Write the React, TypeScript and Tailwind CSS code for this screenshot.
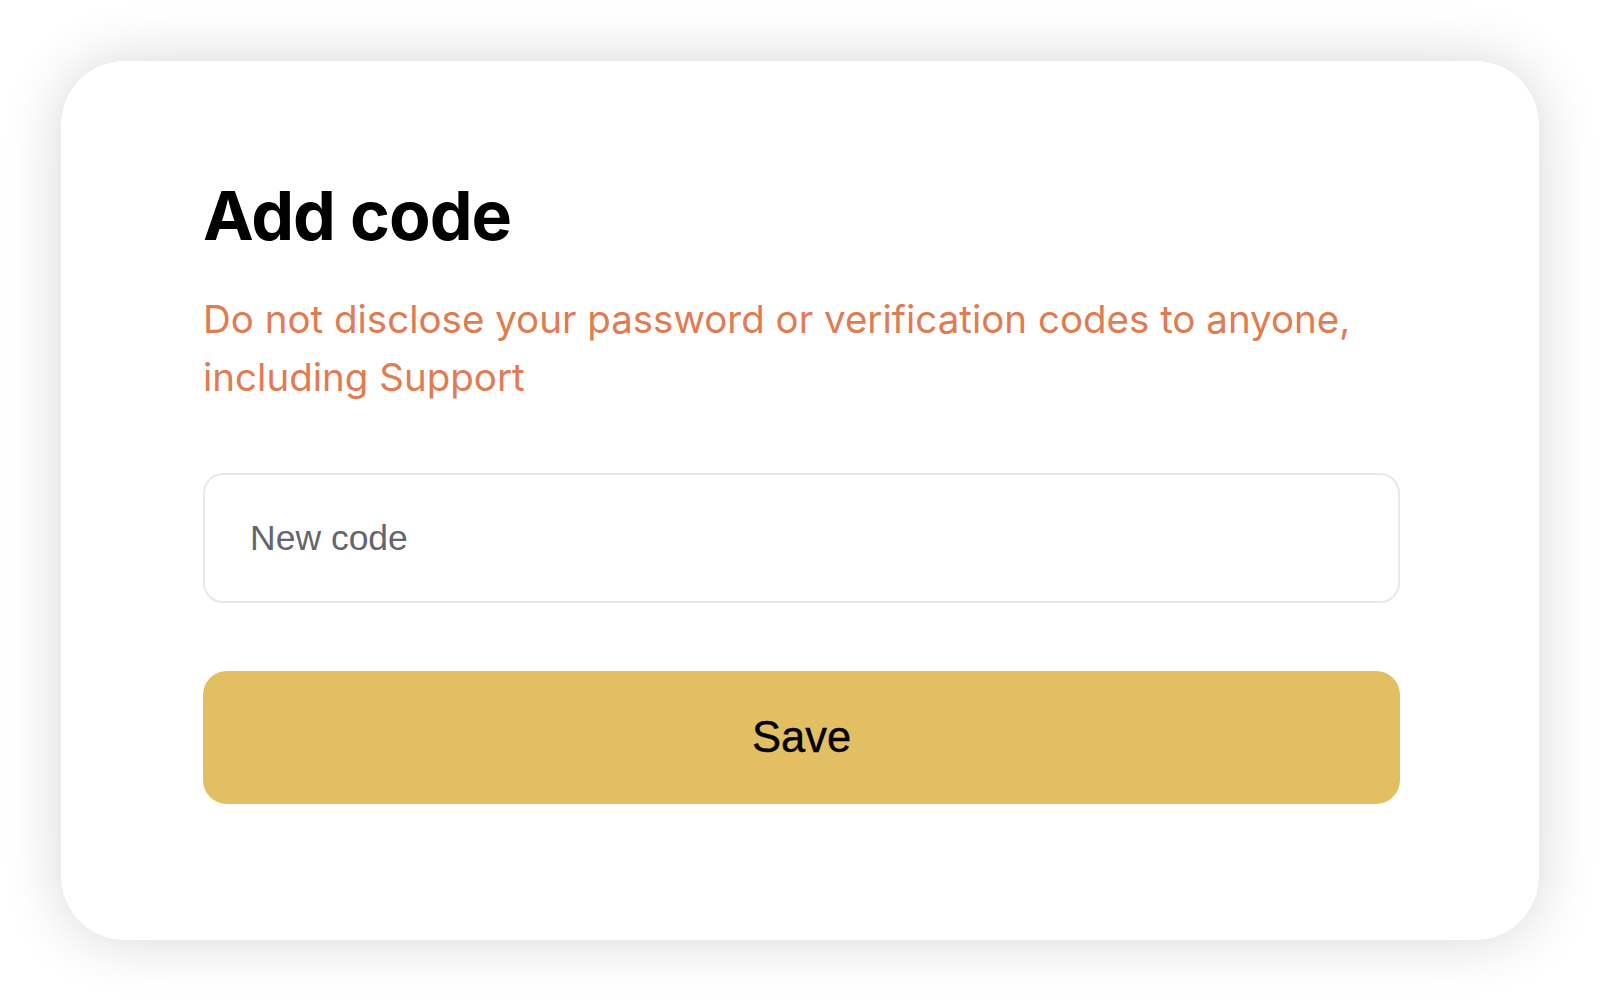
import React from "react";

const AddCodeCard: React.FC = () => {
  return (
    <div className="w-[1478px] rounded-[64px] bg-white pl-[142px] pr-[139px] pt-[120px] pb-[136px] shadow-[0_0_60px_rgba(0,0,0,0.16)]">
      <h1 className="text-[68px] leading-[68px] font-bold tracking-[-0.015em] text-black">Add code</h1>

      <p className="mt-[42px] text-[38.5px] leading-[57.6px] text-[#e07b52]">
        Do not disclose your password or verification codes to anyone, including Support
      </p>

      <div className="mt-[67px] flex h-[130px] items-center rounded-[20px] border-2 border-[#e8e8e8] px-[45px]">
        <input
          className="w-full bg-transparent font-['Liberation_Sans',Arial,sans-serif] text-[35.5px] text-gray-800 outline-none placeholder:text-[#63676d]"
          placeholder="New code"
        />
      </div>

      <button className="mt-[68px] flex h-[133px] w-full items-center justify-center rounded-[24px] bg-[#e2bf62] font-['Liberation_Sans',Arial,sans-serif] text-[43.5px] text-black [-webkit-text-stroke:0.4px_black]">
        Save
      </button>
    </div>
  );
};

export default function App() {
  return (
    <div
      className="h-[1001px] w-full overflow-hidden bg-white pl-[61px] pt-[61px]"
      style={{ fontFamily: "Inter, 'Liberation Sans', sans-serif" }}
    >
      <AddCodeCard />
    </div>
  );
}
